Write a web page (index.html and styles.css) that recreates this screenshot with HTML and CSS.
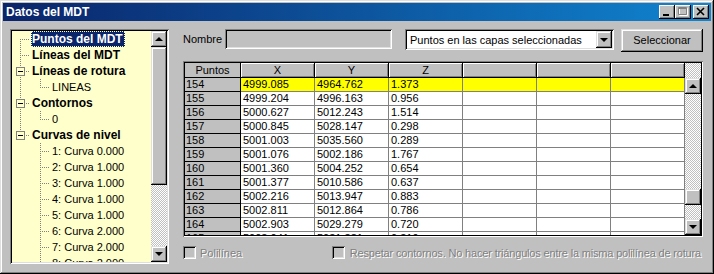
FILE: index.html
```html
<!DOCTYPE html>
<html>
<head>
<meta charset="utf-8">
<title>Datos del MDT</title>
<link rel="stylesheet" href="styles.css">
</head>
<body>
<div class="win">
	<!--title bar-->
	<div class="title">
		<span class="title-text">Datos del MDT</span>
		<span class="tbtn min"><svg width="16" height="14"><rect x="4" y="9" width="6" height="2" fill="#000"/></svg></span>
		<span class="tbtn"><svg width="16" height="14"><path d="M4.5 3.5h8v7h-8z" fill="none" stroke="#fff"/><path d="M3.5 2.5h8v7h-8z M3 3.5h9" fill="none" stroke="#808080"/></svg></span>
		<span class="tbtn close"><svg width="16" height="14"><path d="M4 3l7 7M11 3l-7 7" stroke="#000" stroke-width="1.6"/></svg></span>
	</div>
	<div class="main">
		<!--tree-->
		<div class="tree">
			<div class="tree-con">
				<div class="node"><span class="g first"></span><span class="lbl b sel">Puntos del MDT</span></div>
				<div class="node"><span class="g tee"></span><span class="lbl b">Líneas del MDT</span></div>
				<div class="node"><span class="g tee"><i class="box"></i></span><span class="lbl b">Líneas de rotura</span></div>
				<div class="node"><span class="g pass"></span><span class="g g2 last"></span><span class="lbl">LINEAS</span></div>
				<div class="node"><span class="g tee"><i class="box"></i></span><span class="lbl b">Contornos</span></div>
				<div class="node"><span class="g pass"></span><span class="g g2 last"></span><span class="lbl">0</span></div>
				<div class="node"><span class="g last"><i class="box"></i></span><span class="lbl b">Curvas de nivel</span></div>
				<div class="node"><span class="g"></span><span class="g g2 tee"></span><span class="lbl">1: Curva 0.000</span></div>
				<div class="node"><span class="g"></span><span class="g g2 tee"></span><span class="lbl">2: Curva 1.000</span></div>
				<div class="node"><span class="g"></span><span class="g g2 tee"></span><span class="lbl">3: Curva 1.000</span></div>
				<div class="node"><span class="g"></span><span class="g g2 tee"></span><span class="lbl">4: Curva 1.000</span></div>
				<div class="node"><span class="g"></span><span class="g g2 tee"></span><span class="lbl">5: Curva 1.000</span></div>
				<div class="node"><span class="g"></span><span class="g g2 tee"></span><span class="lbl">6: Curva 2.000</span></div>
				<div class="node"><span class="g"></span><span class="g g2 tee"></span><span class="lbl">7: Curva 2.000</span></div>
				<div class="node"><span class="g"></span><span class="g g2 tee"></span><span class="lbl">8: Curva 2.000</span></div>
			</div>
			<div class="vscroll">
				<span class="sb up"></span>
				<span class="thumb tree-thumb"></span>
				<span class="track"></span>
				<span class="sb down"></span>
			</div>
		</div>
		<!--right panel-->
		<div class="panel">
			<div class="toprow">
				<span class="name-lbl">Nombre</span>
				<span class="edit"></span>
				<span class="combo"><span class="combo-text">Puntos en las capas seleccionadas</span><span class="sb drop down"></span></span>
				<span class="button">Seleccionar</span>
			</div>
			<div class="grid">
				<div class="cells">
					<div class="c f hd">Puntos</div><div class="c h">X</div><div class="c h">Y</div><div class="c h">Z</div><div class="c h"></div><div class="c h"></div><div class="c h"></div>
					<div class="c f">154</div><div class="c y">4999.085</div><div class="c y">4964.762</div><div class="c y">1.373</div><div class="c y"></div><div class="c y"></div><div class="c y"></div>
					<div class="c f">155</div><div class="c">4999.204</div><div class="c">4996.163</div><div class="c">0.956</div><div class="c"></div><div class="c"></div><div class="c"></div>
					<div class="c f">156</div><div class="c">5000.627</div><div class="c">5012.243</div><div class="c">1.514</div><div class="c"></div><div class="c"></div><div class="c"></div>
					<div class="c f">157</div><div class="c">5000.845</div><div class="c">5028.147</div><div class="c">0.298</div><div class="c"></div><div class="c"></div><div class="c"></div>
					<div class="c f">158</div><div class="c">5001.003</div><div class="c">5035.560</div><div class="c">0.289</div><div class="c"></div><div class="c"></div><div class="c"></div>
					<div class="c f">159</div><div class="c">5001.076</div><div class="c">5002.186</div><div class="c">1.767</div><div class="c"></div><div class="c"></div><div class="c"></div>
					<div class="c f">160</div><div class="c">5001.360</div><div class="c">5004.252</div><div class="c">0.654</div><div class="c"></div><div class="c"></div><div class="c"></div>
					<div class="c f">161</div><div class="c">5001.377</div><div class="c">5010.586</div><div class="c">0.637</div><div class="c"></div><div class="c"></div><div class="c"></div>
					<div class="c f">162</div><div class="c">5002.216</div><div class="c">5013.947</div><div class="c">0.883</div><div class="c"></div><div class="c"></div><div class="c"></div>
					<div class="c f">163</div><div class="c">5002.811</div><div class="c">5012.864</div><div class="c">0.786</div><div class="c"></div><div class="c"></div><div class="c"></div>
					<div class="c f">164</div><div class="c">5002.903</div><div class="c">5029.279</div><div class="c">0.720</div><div class="c"></div><div class="c"></div><div class="c"></div>
					<div class="c f">165</div><div class="c">5003.041</div><div class="c">5031.381</div><div class="c">0.319</div><div class="c"></div><div class="c"></div><div class="c"></div>
				</div>
				<div class="vscroll">
					<span class="track corner"></span>
					<span class="sb up"></span>
					<span class="track grid-t1"></span>
					<span class="thumb grid-thumb"></span>
					<span class="track"></span>
					<span class="sb down"></span>
				</div>
			</div>
			<div class="checks">
				<span class="chk"><i class="cb"></i>Polilínea</span>
				<span class="chk long"><i class="cb"></i>Respetar contornos. No hacer triángulos entre la misma polilínea de rotura</span>
			</div>
		</div>
	</div>
</div>
</body>
</html>
```

FILE: styles.css
```css
html,body{margin:0;padding:0;}
body{font:11px "Liberation Sans",Arial,sans-serif;color:#000;background:#c0c0c0;}
i{font-style:normal;}
/*window*/
.win{width:714px;height:274px;box-sizing:border-box;padding:3px;background:#c0c0c0;display:flex;flex-direction:column;
	box-shadow:inset -1px -1px #000,inset 1px 1px #dfdfdf,inset -2px -2px #808080,inset 2px 2px #fff;}
.title{height:18px;flex:none;display:flex;align-items:center;padding:0 2px 0 3px;background:linear-gradient(to right,#0a246a,#1084d0);}
	.title-text{color:#fff;font:bold 12px "Liberation Sans",Arial,sans-serif;margin-right:auto;}
	.tbtn{width:16px;height:14px;display:block;background:#c0c0c0;
		box-shadow:inset -1px -1px #000,inset 1px 1px #fff,inset -2px -2px #808080;}
	.tbtn svg{display:block;}
	.tbtn.close{margin-left:2px;}
.main{flex:1;display:flex;padding:8px 0 0 7px;}
/*raised bits*/
.sb,.thumb,.button{background:#c0c0c0;box-shadow:inset -1px -1px #000,inset 1px 1px #dfdfdf,inset -2px -2px #808080,inset 2px 2px #fff;}
.sb{height:16px;flex:none;display:flex;align-items:center;justify-content:center;}
	.sb.up::before{content:"";border-style:solid;border-width:0 4px 4px;border-color:transparent transparent #000;margin-top:-1px;}
	.sb.down::before{content:"";border-style:solid;border-width:4px 4px 0;border-color:#000 transparent transparent;}
.track{background:repeating-conic-gradient(#c0c0c0 0 25%,#fff 0 50%) 0 0/2px 2px;flex:1;}
.vscroll{width:16px;flex:none;display:flex;flex-direction:column;}
/*tree*/
.tree{width:159px;height:235px;box-sizing:border-box;padding:2px;display:flex;background:#ffffcc;
	box-shadow:inset 1px 1px #808080,inset -1px -1px #fff,inset 2px 2px #000,inset -2px -2px #dfdfdf;}
	.tree-con{flex:1;overflow:hidden;}
	.node{height:16px;display:flex;align-items:center;white-space:nowrap;}
	.g{--x:8px;width:18px;height:16px;flex:none;display:flex;align-items:center;background-repeat:no-repeat;}
	.g2{--x:10px;width:20px;}
	.pass{background-image:repeating-linear-gradient(to bottom,#808080 0 1px,transparent 1px 2px);background-size:1px 16px;background-position:var(--x) 0;}
	.tee,.first,.last{background-image:repeating-linear-gradient(to bottom,#808080 0 1px,transparent 1px 2px),repeating-linear-gradient(to right,#808080 0 1px,transparent 1px 2px);}
	.tee{background-size:1px 16px,10px 1px;background-position:var(--x) 0,var(--x) 8px;}
	.first{background-size:1px 8px,10px 1px;background-position:var(--x) 8px,var(--x) 8px;}
	.last{background-size:1px 9px,10px 1px;background-position:var(--x) 0,var(--x) 8px;}
	.box{width:9px;height:9px;box-sizing:border-box;margin:1px 0 0 4px;border:1px solid #808080;background:#ffffcc;display:flex;align-items:center;justify-content:center;}
	.box::after{content:"";width:5px;height:1px;background:#000;}
	.lbl{height:16px;box-sizing:border-box;line-height:14px;margin-left:1px;padding-right:1px;border:1px dotted transparent;}
	.lbl.b{font:bold 12px/14px "Liberation Sans",Arial,sans-serif;}
	.lbl.sel{background:#0a246a;color:#fff;border-color:#ffffcc;}
	.tree-thumb{height:138px;flex:none;}
/*right panel*/
.panel{width:520px;margin-left:14px;display:flex;flex-direction:column;}
.toprow{height:23px;display:flex;align-items:flex-start;}
	.name-lbl{width:42px;line-height:20px;}
	.edit,.combo{box-sizing:border-box;box-shadow:inset 1px 1px #808080,inset -1px -1px #fff,inset 2px 2px #000,inset -2px -2px #dfdfdf;}
	.edit{width:167px;height:20px;background:#c0c0c0;}
	.combo{width:209px;height:21px;margin-left:13px;padding:2px;background:#fff;display:flex;align-items:center;}
	.combo-text{flex:1;padding-left:3px;white-space:nowrap;overflow:hidden;}
	.drop{width:16px;height:17px;}
	.button{width:82px;height:23px;margin-left:7px;line-height:23px;text-align:center;}
/*grid*/
.grid{height:176px;margin-top:9px;box-sizing:border-box;padding:2px;display:flex;background:#fff;
	box-shadow:inset 1px 1px #808080,inset -1px -1px #fff,inset 2px 2px #000,inset -2px -2px #000;}
	.cells{flex:1;overflow:hidden;display:grid;grid-template-columns:56px repeat(6,74px);grid-template-rows:15px;grid-auto-rows:14px;}
	.c{box-sizing:border-box;border-right:1px solid #808080;border-bottom:1px solid #808080;background:#fff;padding-left:2px;line-height:13px;white-space:nowrap;overflow:hidden;}
	.c.f{background:#c0c0c0;border-color:#000;padding-left:1px;}
	.c.h{background:#c0c0c0;border-color:#000;text-align:center;padding:0;line-height:14px;box-shadow:inset 1px 1px #fff,inset -1px -1px #808080;}
	.c.hd{text-align:center;padding:0;line-height:14px;}
	.c.y{background:#ff0;}
	.corner{height:15px;flex:none;}
	.grid-t1{height:95px;flex:none;}
	.grid-thumb{height:16px;flex:none;}
/*checkboxes*/
.checks{height:15px;margin-top:8px;display:flex;justify-content:space-between;}
	.chk{display:flex;align-items:center;gap:4px;color:#808080;text-shadow:1px 1px #fff;white-space:nowrap;}
	.chk.long{gap:5px;letter-spacing:-0.17px;margin-right:2px;}
	.cb{width:13px;height:13px;box-sizing:border-box;background:#c0c0c0;box-shadow:inset 1px 1px #808080,inset -1px -1px #fff,inset 2px 2px #000,inset -2px -2px #dfdfdf;}
```
